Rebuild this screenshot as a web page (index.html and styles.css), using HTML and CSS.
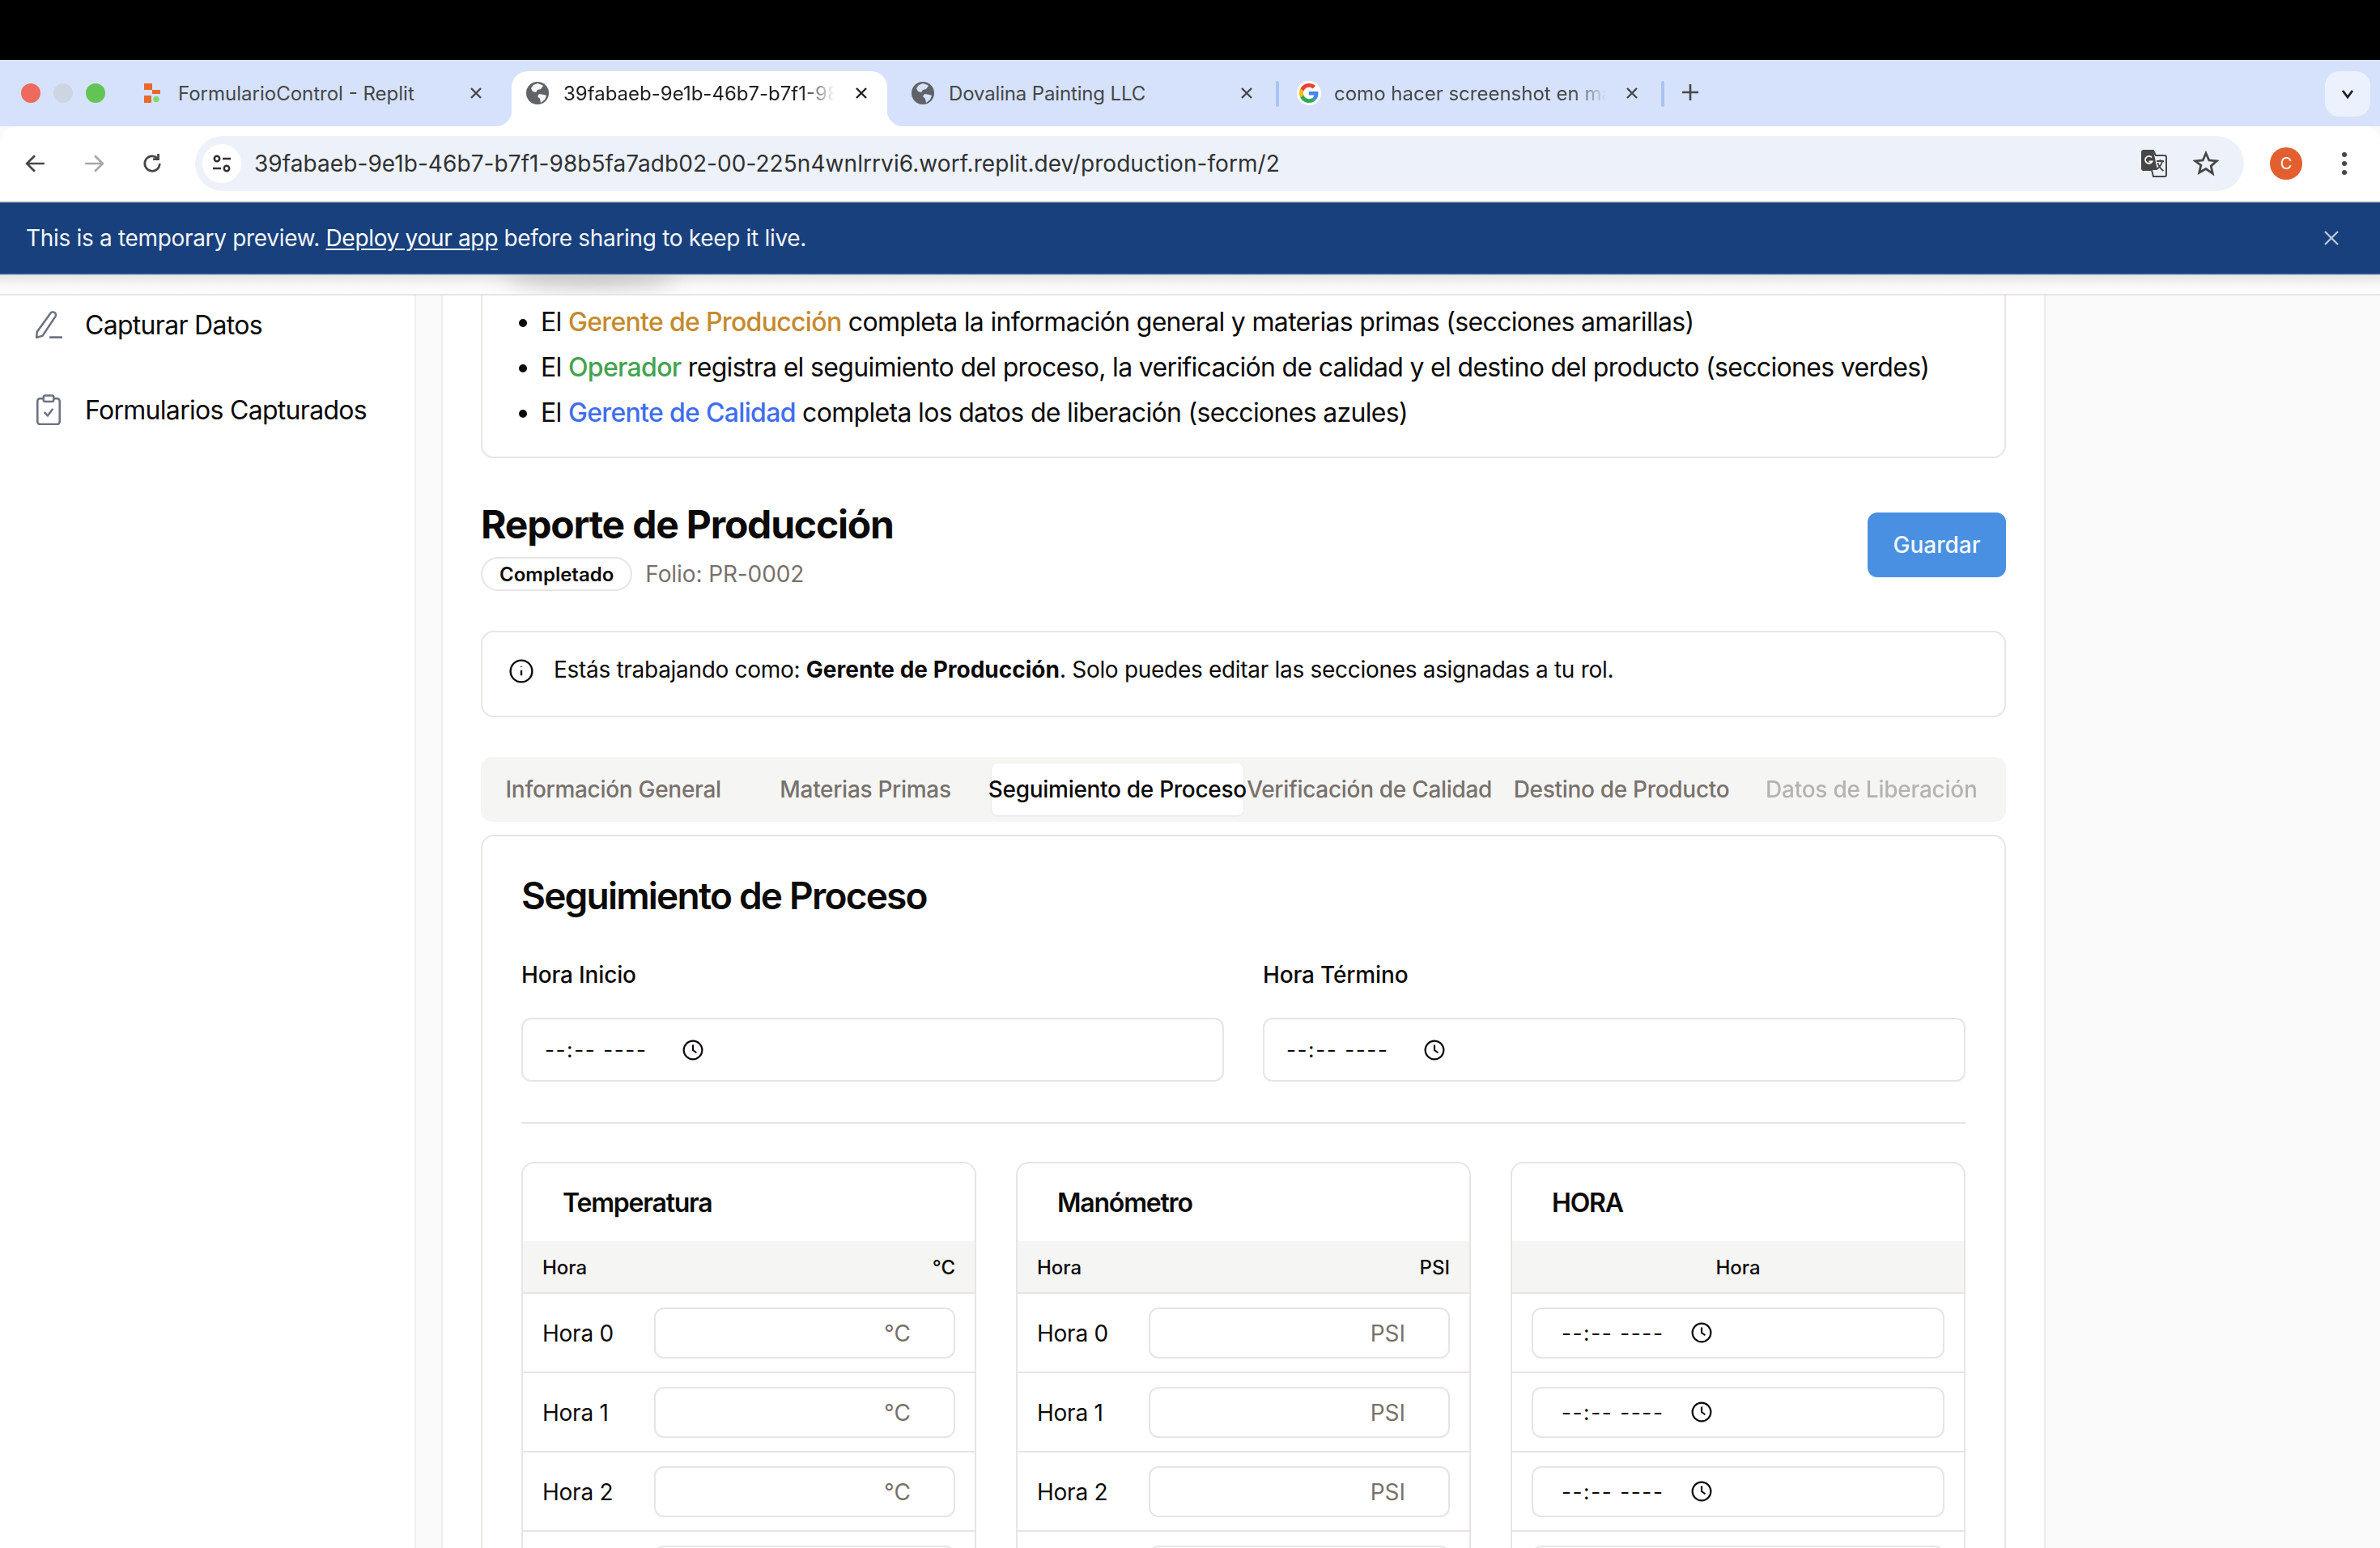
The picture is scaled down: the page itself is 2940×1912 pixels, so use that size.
FILE: index.html
```html
<!DOCTYPE html>
<html lang="es">
<head>
<meta charset="utf-8">
<title>Reporte de Producción</title>
<link rel="stylesheet" href="styles.css">
</head>
<body>
<div class="blackbar"></div>
<header class="tabstrip">
  <div class="lights"><i class="light red"></i><i class="light grey"></i><i class="light green"></i></div>
  <div class="tab t1">
    <svg class="fav-r" viewBox="0 0 20 24"><rect x="0" y="0" width="10" height="8" fill="#e8692c"/><rect x="10" y="8" width="10" height="5" fill="#e8692c"/><rect x="0" y="15" width="9" height="9" fill="#e8692c"/><circle cx="15" cy="19.500" r="3.800" fill="#7dd87a"/></svg>
    <span class="tab-title">FormularioControl - Replit</span>
    <svg class="tab-x" viewBox="0 0 16 16"><path d="M2 2l12 12M14 2L2 14"/></svg>
  </div>
  <div class="tab t2 active">
    <svg class="fav" viewBox="0 0 28 28"><circle cx="14" cy="14" r="14" fill="#5f6368"/><path d="M14 2c2 1 5 1 7 3l-3 4-4 1-2 3-4-1-2-4 3-4 5-2zM16 15l6 1 3 1-2 5-5 4-1-5-3-3z" fill="#fff" opacity=".95"/></svg>
    <span class="tab-title fade">39fabaeb-9e1b-46b7-b7f1-98b5fa7adb02</span>
    <svg class="tab-x dark" viewBox="0 0 16 16"><path d="M2 2l12 12M14 2L2 14"/></svg>
  </div>
  <div class="tab t3">
    <svg class="fav" viewBox="0 0 28 28"><circle cx="14" cy="14" r="14" fill="#5f6368"/><path d="M14 2c2 1 5 1 7 3l-3 4-4 1-2 3-4-1-2-4 3-4 5-2zM16 15l6 1 3 1-2 5-5 4-1-5-3-3z" fill="#d6e2fb"/></svg>
    <span class="tab-title">Dovalina Painting LLC</span>
    <svg class="tab-x" viewBox="0 0 16 16"><path d="M2 2l12 12M14 2L2 14"/></svg>
  </div>
  <i class="tab-sep"></i>
  <div class="tab t4">
    <span class="g-wrap"><svg viewBox="0 0 48 48"><path fill="#EA4335" d="M24 9.500c3.500 0 6.700 1.200 9.200 3.600l6.900-6.900C35.900 2.400 30.500 0 24 0 14.600 0 6.500 5.400 2.600 13.200l8 6.200C12.500 13.600 17.800 9.500 24 9.500z"/><path fill="#4285F4" d="M46.900 24.500c0-1.600-.1-3.100-.4-4.500H24v9h12.900c-.6 3-2.200 5.500-4.700 7.200l7.700 6c4.500-4.200 7-10.300 7-17.700z"/><path fill="#FBBC05" d="M10.500 28.600c-.5-1.500-.8-3-.8-4.600s.3-3.200.8-4.600l-8-6.200C.9 16.500 0 20.100 0 24s.9 7.500 2.600 10.800l7.900-6.200z"/><path fill="#34A853" d="M24 48c6.500 0 11.900-2.100 15.900-5.800l-7.700-6c-2.100 1.400-4.900 2.300-8.200 2.300-6.200 0-11.500-4.100-13.400-9.900l-8 6.200C6.500 42.600 14.600 48 24 48z"/></svg></span>
    <span class="tab-title fade">como hacer screenshot en mac</span>
    <svg class="tab-x" viewBox="0 0 16 16"><path d="M2 2l12 12M14 2L2 14"/></svg>
  </div>
  <i class="tab-sep"></i>
  <svg class="plus" viewBox="0 0 20 20"><path d="M10 0v20M0 10h20"/></svg>
  <div class="spacer"></div>
  <div class="tab-menu"><svg viewBox="0 0 16 12"><path d="M2 2l6 8 6-8"/></svg></div>
</header>
<nav class="toolbar">
  <svg class="nav-ic" viewBox="0 0 24 24"><path d="M22 12H3M11 3l-9 9 9 9"/></svg>
  <svg class="nav-ic off" viewBox="0 0 24 24"><path d="M2 12h19M13 3l9 9-9 9"/></svg>
  <svg class="nav-ic" viewBox="0 0 24 24"><path d="M20.500 12a8.500 8.500 0 1 1-2.500-6M19 1v6h-6"/></svg>
  <div class="omnibox">
    <span class="tune"><svg viewBox="0 0 24 24"><circle cx="6" cy="6" r="3.200"/><path d="M13 6h10M1 18h10"/><circle cx="18" cy="18" r="3.200"/></svg></span>
    <span class="url">39fabaeb-9e1b-46b7-b7f1-98b5fa7adb02-00-225n4wnlrrvi6.worf.replit.dev/production-form/2</span>
    <svg class="translate" viewBox="0 0 32 32"><path d="M3 0h12l3 6h11a2 2 0 0 1 2 2v22a2 2 0 0 1-2 2H15l-2-8H3a2 2 0 0 1-2-2V2a2 2 0 0 1 2-2z" fill="none" stroke="#474747" stroke-width="2"/><path d="M3 0h12l5 24H3a2 2 0 0 1-2-2V2a2 2 0 0 1 2-2z" fill="#474747"/><path d="M13 8.500a4.500 4.500 0 1 0 .5 5h-4" fill="none" stroke="#fff" stroke-width="1.800"/><path d="M19 13h9M23.500 11v2M26 13c-1 5-4 8-7 10M20.500 15c1 4 4 8 7 10" fill="none" stroke="#474747" stroke-width="1.800"/></svg>
    <svg class="star" viewBox="0 0 30 30"><path d="M15 3l3.600 8.200 8.900.8-6.700 5.900 2 8.700L15 21.100l-7.800 4.500 2-8.700L2.500 12l8.900-.8z"/></svg>
  </div>
  <span class="avatar">C</span>
  <svg class="dots" viewBox="0 0 6 28"><circle cx="3" cy="3" r="3"/><circle cx="3" cy="14" r="3"/><circle cx="3" cy="25" r="3"/></svg>
</nav>
<div class="banner">
  <p class="banner-text">This is a temporary preview. <a class="banner-link">Deploy your app</a> before sharing to keep it live.</p>
  <svg class="banner-x" viewBox="0 0 20 20"><path d="M2 2l16 16M18 2L2 18"/></svg>
</div>
<div class="shadow-strip"><i class="smudge"></i></div>

<div class="workspace">
  <aside class="sidebar">
    <a class="side-item">
      <svg class="side-ic" viewBox="0 0 34 32"><path d="M19 3a3.400 3.400 0 0 1 6 3.500L10 29l-7 2 .5-6.500z"/><path d="M18 31h15" stroke-width="3"/></svg>
      <span>Capturar Datos</span>
    </a>
    <a class="side-item">
      <svg class="side-ic clip" viewBox="0 0 30 36"><path d="M9 5H5a3 3 0 0 0-3 3v24a3 3 0 0 0 3 3h20a3 3 0 0 0 3-3V8a3 3 0 0 0-3-3h-4"/><rect x="9" y="1.500" width="12" height="7" rx="2"/><path d="M10 21l4 4 6-8"/></svg>
      <span>Formularios Capturados</span>
    </a>
  </aside>
  <main class="panel">
    <section class="roles">
      <ul class="role-list">
        <li>El <span class="c-amber">Gerente de Producción</span> completa la información general y materias primas (secciones amarillas)</li>
        <li>El <span class="c-green">Operador</span> registra el seguimiento del proceso, la verificación de calidad y el destino del producto (secciones verdes)</li>
        <li>El <span class="c-blue">Gerente de Calidad</span> completa los datos de liberación (secciones azules)</li>
      </ul>
    </section>

    <div class="report-head">
      <div>
        <h1 class="report-title">Reporte de Producción</h1>
        <div class="report-meta"><span class="badge">Completado</span><span class="folio">Folio: PR-0002</span></div>
      </div>
      <button class="save">Guardar</button>
    </div>

    <div class="alert">
      <svg class="alert-ic" viewBox="0 0 28 28"><circle cx="14" cy="14" r="12.500"/><path d="M14 19v-6M14 8.500v.5"/></svg>
      <p class="alert-text">Estás trabajando como: <strong>Gerente de Producción</strong>. Solo puedes editar las secciones asignadas a tu rol.</p>
    </div>

    <div class="tabs">
      <span class="ftab">Información General</span>
      <span class="ftab">Materias Primas</span>
      <span class="ftab on">Seguimiento de Proceso</span>
      <span class="ftab">Verificación de Calidad</span>
      <span class="ftab">Destino de Producto</span>
      <span class="ftab dis">Datos de Liberación</span>
    </div>

    <section class="card">
      <h2 class="card-title">Seguimiento de Proceso</h2>
      <div class="time-grid">
        <div>
          <label class="field-label">Hora Inicio</label>
          <div class="time-input big"><span class="dashes">--:-- ----</span><svg class="clock" viewBox="0 0 24 24"><circle cx="12" cy="12" r="10.500"/><path d="M12 6v6l4 3"/></svg></div>
        </div>
        <div>
          <label class="field-label">Hora Término</label>
          <div class="time-input big"><span class="dashes">--:-- ----</span><svg class="clock" viewBox="0 0 24 24"><circle cx="12" cy="12" r="10.500"/><path d="M12 6v6l4 3"/></svg></div>
        </div>
      </div>
      <hr class="divider">
      <div class="sub-grid">
        <div class="sub">
          <h3 class="sub-title">Temperatura</h3>
          <div class="sub-head"><span>Hora</span><span>°C</span></div>
          <div class="row"><span class="row-label">Hora 0</span><input class="num" placeholder="°C"></div>
          <div class="row"><span class="row-label">Hora 1</span><input class="num" placeholder="°C"></div>
          <div class="row"><span class="row-label">Hora 2</span><input class="num" placeholder="°C"></div>
          <div class="row"><span class="row-label">Hora 3</span><input class="num" placeholder="°C"></div>
        </div>
        <div class="sub">
          <h3 class="sub-title">Manómetro</h3>
          <div class="sub-head"><span>Hora</span><span>PSI</span></div>
          <div class="row"><span class="row-label">Hora 0</span><input class="num" placeholder="PSI"></div>
          <div class="row"><span class="row-label">Hora 1</span><input class="num" placeholder="PSI"></div>
          <div class="row"><span class="row-label">Hora 2</span><input class="num" placeholder="PSI"></div>
          <div class="row"><span class="row-label">Hora 3</span><input class="num" placeholder="PSI"></div>
        </div>
        <div class="sub">
          <h3 class="sub-title">HORA</h3>
          <div class="sub-head center"><span>Hora</span></div>
          <div class="row"><div class="time-input small"><span class="dashes">--:-- ----</span><svg class="clock" viewBox="0 0 24 24"><circle cx="12" cy="12" r="10.500"/><path d="M12 6v6l4 3"/></svg></div></div>
          <div class="row"><div class="time-input small"><span class="dashes">--:-- ----</span><svg class="clock" viewBox="0 0 24 24"><circle cx="12" cy="12" r="10.500"/><path d="M12 6v6l4 3"/></svg></div></div>
          <div class="row"><div class="time-input small"><span class="dashes">--:-- ----</span><svg class="clock" viewBox="0 0 24 24"><circle cx="12" cy="12" r="10.500"/><path d="M12 6v6l4 3"/></svg></div></div>
          <div class="row"><div class="time-input small"><span class="dashes">--:-- ----</span><svg class="clock" viewBox="0 0 24 24"><circle cx="12" cy="12" r="10.500"/><path d="M12 6v6l4 3"/></svg></div></div>
        </div>
      </div>
    </section>
  </main>
</div>
</body>
</html>
```
FILE: styles.css
```css
* { box-sizing: border-box; }
html, body { margin: 0; height: 1912px; overflow: hidden; }
body { font-family: Inter, "Noto Sans", sans-serif; background: #fafafa; color: #0c0a09; display: flex; flex-direction: column; }
p, h1, h2, h3, ul { margin: 0; padding: 0; }

.blackbar { height: 74px; background: #000; flex: none; }

.tabstrip { height: 82px; flex: none; background: #d6e2fb; display: flex; align-items: flex-start; padding-top: 14px; padding-right: 12px; }
.lights { width: 160px; height: 54px; flex: none; display: flex; gap: 16px; padding-left: 26px; align-items: center; }
.light { width: 24px; height: 24px; border-radius: 50%; display: block; }
.red { background: #ee6a5f; }
.grey { background: #cdd5e2; }
.green { background: #61c454; }
.tab { height: 54px; display: flex; align-items: center; flex: none; font-size: 24px; color: #45474a; position: relative; }
.tab-title { flex: 1; white-space: nowrap; overflow: hidden; margin-right: 16px; }
.fade { -webkit-mask-image: linear-gradient(90deg, #000 88%, transparent 100%); mask-image: linear-gradient(90deg, #000 88%, transparent 100%); }
.tab-x { width: 16px; height: 16px; flex: none; fill: none; stroke: #45474a; stroke-width: 2.400; }
.tab-x.dark { stroke: #1f1f1f; }
.t1 { width: 472px; padding: 0 36px 0 18px; }
.t2 { width: 464px; padding: 0 24px 14px 18px; height: 68px; background: #fff; border-radius: 20px 20px 0 0; color: #1f1f1f; }
.t2::before, .t2::after { content: ""; position: absolute; bottom: 0; width: 20px; height: 20px; }
.t2::before { left: -20px; background: radial-gradient(circle at 0 0, transparent 20px, #fff 20.500px); }
.t2::after { right: -20px; background: radial-gradient(circle at 100% 0, transparent 20px, #fff 20.500px); }
.t3 { width: 480px; padding: 0 28px 0 30px; }
.t3 .tab-title { letter-spacing: -.15px; }
.t4 { width: 472px; padding: 0 28px 0 22px; }
.fav-r { width: 20px; height: 24px; flex: none; margin-right: 22px; }
.fav { width: 28px; height: 28px; flex: none; margin-right: 18px; }
.g-wrap { width: 30px; height: 30px; flex: none; margin-right: 16px; border-radius: 50%; background: #fff; padding: 3px; display: flex; }
.g-wrap svg { width: 24px; height: 24px; }
.t2 .tab-title { margin-right: 25px; }
.t4 .tab-title { margin-right: 24px; }
.tab-sep { width: 4px; height: 32px; margin-top: 12px; background: #a9c3f5; border-radius: 2px; flex: none; }
.plus { width: 20px; height: 20px; margin: 16px 0 0 22px; fill: none; stroke: #45474a; stroke-width: 2.600; flex: none; }
.spacer { flex: 1; }
.tab-menu { width: 56px; height: 56px; border-radius: 18px; background: #ecf2fd; display: flex; align-items: center; justify-content: center; flex: none; }
.tab-menu svg { width: 16px; height: 12px; fill: none; stroke: #1f1f1f; stroke-width: 2.800; }

.toolbar { height: 94px; flex: none; background: #fff; border-radius: 20px 20px 0 0; border-bottom: 2px solid #d5dcdc; display: flex; align-items: center; padding-left: 31px; position: relative; }
.nav-ic { width: 26px; height: 26px; flex: none; fill: none; stroke: #474747; stroke-width: 2.500; margin-right: 46px; }
.nav-ic.off { stroke: #a6a8ab; }
.nav-ic:nth-child(3) { margin-right: 40px; }
.omnibox { width: 2531px; height: 68px; border-radius: 34px; background: #edf2fa; display: flex; align-items: center; padding: 0 31px 0 9px; flex: none; }
.tune { width: 48px; height: 48px; border-radius: 50%; background: #fff; display: flex; align-items: center; justify-content: center; flex: none; }
.tune svg { width: 24px; height: 24px; fill: none; stroke: #303030; stroke-width: 2.500; }
.url { flex: 1; margin-left: 16px; font-size: 28px; color: #303133; white-space: nowrap; letter-spacing: .065px; }
.translate { width: 32px; height: 34px; flex: none; margin-right: 32px; }
.star { width: 32px; height: 32px; flex: none; fill: none; stroke: #474747; stroke-width: 2.600; }
.avatar { width: 40px; height: 40px; border-radius: 50%; background: #e35f2f; color: #fff; font-size: 20px; display: flex; align-items: center; justify-content: center; flex: none; margin-left: 32px; }
.dots { width: 6px; height: 28px; flex: none; fill: #474747; margin-left: 49px; }

.banner { height: 89px; flex: none; background: #18407d; border-bottom: 2px solid #2a5290; display: flex; align-items: center; justify-content: space-between; padding: 0 50px 0 32px; color: #fff; }
.banner-text { font-size: 28px; color: #f3f5f9; letter-spacing: -.32px; }
.banner-link { text-decoration: underline; color: #fff; text-underline-offset: 3px; }
.banner-x { width: 20px; height: 20px; fill: none; stroke: #bcc6dc; stroke-width: 2.400; flex: none; }
.shadow-strip { height: 26px; flex: none; background: linear-gradient(#e4e4e4, #f7f7f7 55%, #fdfdfd); border-bottom: 2px solid #e7e5e4; position: relative; overflow: hidden; }
.smudge { position: absolute; left: 625px; top: -14px; width: 210px; height: 30px; background: #c8c8c8; filter: blur(12px); border-radius: 50%; }

.workspace { flex: 1; display: flex; min-height: 0; overflow: hidden; }
.sidebar { width: 514px; flex: none; background: #fff; border-right: 2px solid #f1f0ef; padding-top: 4px; display: flex; flex-direction: column; gap: 41px; }
.side-item { display: flex; align-items: center; height: 64px; padding-left: 42px; font-size: 32px; letter-spacing: -.7px; }
.side-ic { width: 36px; height: 34px; flex: none; fill: none; stroke: #6b7280; stroke-width: 2.400; margin-right: 27px; }
.side-ic.clip { height: 38px; }
.panel { width: 1982px; flex: none; margin-left: 31px; background: #fff; border-left: 2px solid #eeedec; border-right: 2px solid #eeedec; padding: 0 47px 0 47px; }

.roles { border: 2px solid #e7e5e4; border-top: 0; border-radius: 0 0 16px 16px; padding: 5px 30px 26px 47px; }
.role-list { list-style: disc; padding-left: 25px; font-size: 32px; line-height: 56px; letter-spacing: -.68px; }
.c-amber, .c-green, .c-blue { font-weight: 500; }
.c-amber { color: #c58a2d; }
.c-green { color: #45a34f; }
.c-blue { color: #3f6ef0; }

.report-head { display: flex; align-items: center; justify-content: space-between; margin-top: 52px; }
.report-title { font-size: 48px; line-height: 60px; font-weight: 700; letter-spacing: -1.200px; color: #0c0a09; }
.report-meta { display: flex; align-items: center; gap: 16px; margin-top: 10px; }
.badge { height: 42px; padding: 0 21px; border: 2px solid #e7e5e4; border-radius: 21px; font-size: 24px; font-weight: 600; display: flex; align-items: center; }
.folio { font-size: 28px; color: #78716c; letter-spacing: -.1px; }
.save { width: 171px; height: 80px; border: 0; border-radius: 12px; background: #4a90e2; color: #f5f9fe; font: 500 28px Inter, sans-serif; margin-bottom: 3px; }

.alert { height: 107px; margin-top: 49px; border: 2px solid #e7e5e4; border-radius: 16px; display: flex; align-items: flex-start; padding: 26px 33px 0; gap: 25px; }
.alert-ic { width: 30px; height: 30px; flex: none; fill: none; stroke: #0c0a09; stroke-width: 2.200; margin-top: 7px; }
.alert-text { font-size: 28px; line-height: 40px; letter-spacing: -.3px; }
.alert-text strong { font-weight: 700; letter-spacing: 0; }

.tabs { height: 80px; margin-top: 49px; background: #f5f5f4; border-radius: 14px; padding: 8px; display: grid; grid-template-columns: repeat(6, minmax(0, 1fr)); }
.ftab { display: flex; align-items: center; justify-content: center; white-space: nowrap; font-size: 28px; font-weight: 500; color: #78716c; border-radius: 8px; letter-spacing: -.3px; }
.ftab.on { background: #fff; color: #0c0a09; box-shadow: 0 1px 3px rgba(0,0,0,.08); }
.ftab.dis { opacity: .5; padding-right: 5px; letter-spacing: -.25px; }

.card { margin-top: 16px; border: 2px solid #e7e5e4; border-radius: 16px; padding: 48px 48px 0; }
.card-title { font-size: 46px; line-height: 50px; font-weight: 600; letter-spacing: -1.780px; }
.time-grid { display: grid; grid-template-columns: repeat(2, minmax(0, 1fr)); gap: 48px; margin-top: 53px; }
.field-label { display: block; font-size: 28px; line-height: 40px; font-weight: 500; margin-bottom: 33px; letter-spacing: -.15px; }
.time-input { display: flex; align-items: center; border: 2px solid #e7e5e4; border-radius: 12px; background: #fff; }
.time-input.big { height: 79px; padding-left: 27px; gap: 44px; }
.time-input.small { height: 63px; width: 100%; padding-left: 35px; gap: 34px; }
.dashes { font-size: 26px; letter-spacing: 1.600px; white-space: nowrap; }
.clock { width: 26px; height: 26px; fill: none; stroke: #0c0a09; stroke-width: 2; flex: none; }
.divider { height: 2px; border: 0; background: #e7e5e4; margin: 50px 0 47px; }

.sub-grid { display: grid; grid-template-columns: repeat(3, minmax(0, 1fr)); gap: 49px; }
.sub { border: 2px solid #e7e5e4; border-bottom: 0; border-radius: 16px 16px 0 0; }
.sub-title { height: 96px; padding-left: 49px; display: flex; align-items: center; font-size: 32px; font-weight: 600; letter-spacing: -1.200px; }
.sub-head { height: 65px; background: #f5f5f4; border-bottom: 2px solid #e7e5e4; display: flex; align-items: center; justify-content: space-between; padding: 2px 24px 0; font-size: 24px; font-weight: 500; }
.sub-head.center { justify-content: center; }
.row { height: 98px; border-bottom: 2px solid #e7e5e4; display: flex; align-items: center; padding: 0 24px; }
.row-label { width: 138px; flex: none; font-size: 28px; letter-spacing: -.25px; padding-top: 2px; }
.num { flex: 1; min-width: 0; height: 63px; border: 2px solid #e7e5e4; border-radius: 12px; text-align: right; padding: 2px 53px 0 16px; font: 28px Inter, sans-serif; background: #fff; }
.num::placeholder { color: #78716c; opacity: 1; }
```
